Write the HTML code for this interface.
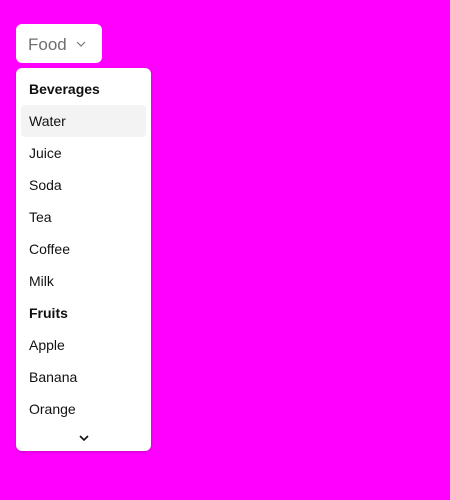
<!DOCTYPE html>
<html><head><style>
body{margin:0;width:450px;height:500px;background:#ff00ff;font-family:"Liberation Sans",sans-serif;position:relative;overflow:hidden}
.btn{position:absolute;left:16px;top:24px;width:86px;height:39px;background:#fff;border-radius:6px}
.btn span{position:absolute;left:12px;top:11px;font-size:17px;color:#6f6f6f}
.menu{position:absolute;left:16px;top:68px;width:135px;height:383px;background:#fff;border-radius:6px;box-shadow:0 1px 3px rgba(0,0,0,.2)}
.it{position:absolute;left:5px;width:125px;height:32px;line-height:32px;font-size:14px;color:#111;padding-left:8px;box-sizing:border-box;border-radius:4px}
.b{font-weight:bold}
.hl{background:#f3f3f3}
</style></head><body>
<div class="btn"><span>Food</span></div>
<svg style="position:absolute;left:76px;top:41px" width="10" height="6" viewBox="0 0 10 6"><path d="M1 1l4 4 4-4" fill="none" stroke="#777" stroke-width="1.2"/></svg>
<div class="menu">
<div class="it b" style="top:5px">Beverages</div>
<div class="it hl" style="top:37px">Water</div>
<div class="it" style="top:69px">Juice</div>
<div class="it" style="top:101px">Soda</div>
<div class="it" style="top:133px">Tea</div>
<div class="it" style="top:165px">Coffee</div>
<div class="it" style="top:197px">Milk</div>
<div class="it b" style="top:229px">Fruits</div>
<div class="it" style="top:261px">Apple</div>
<div class="it" style="top:293px">Banana</div>
<div class="it" style="top:325px">Orange</div>
<svg style="position:absolute;left:63px;top:367px" width="10" height="6" viewBox="0 0 10 6"><path d="M1 1l4 4 4-4" fill="none" stroke="#111" stroke-width="1.6"/></svg>
</div>
</body></html>
